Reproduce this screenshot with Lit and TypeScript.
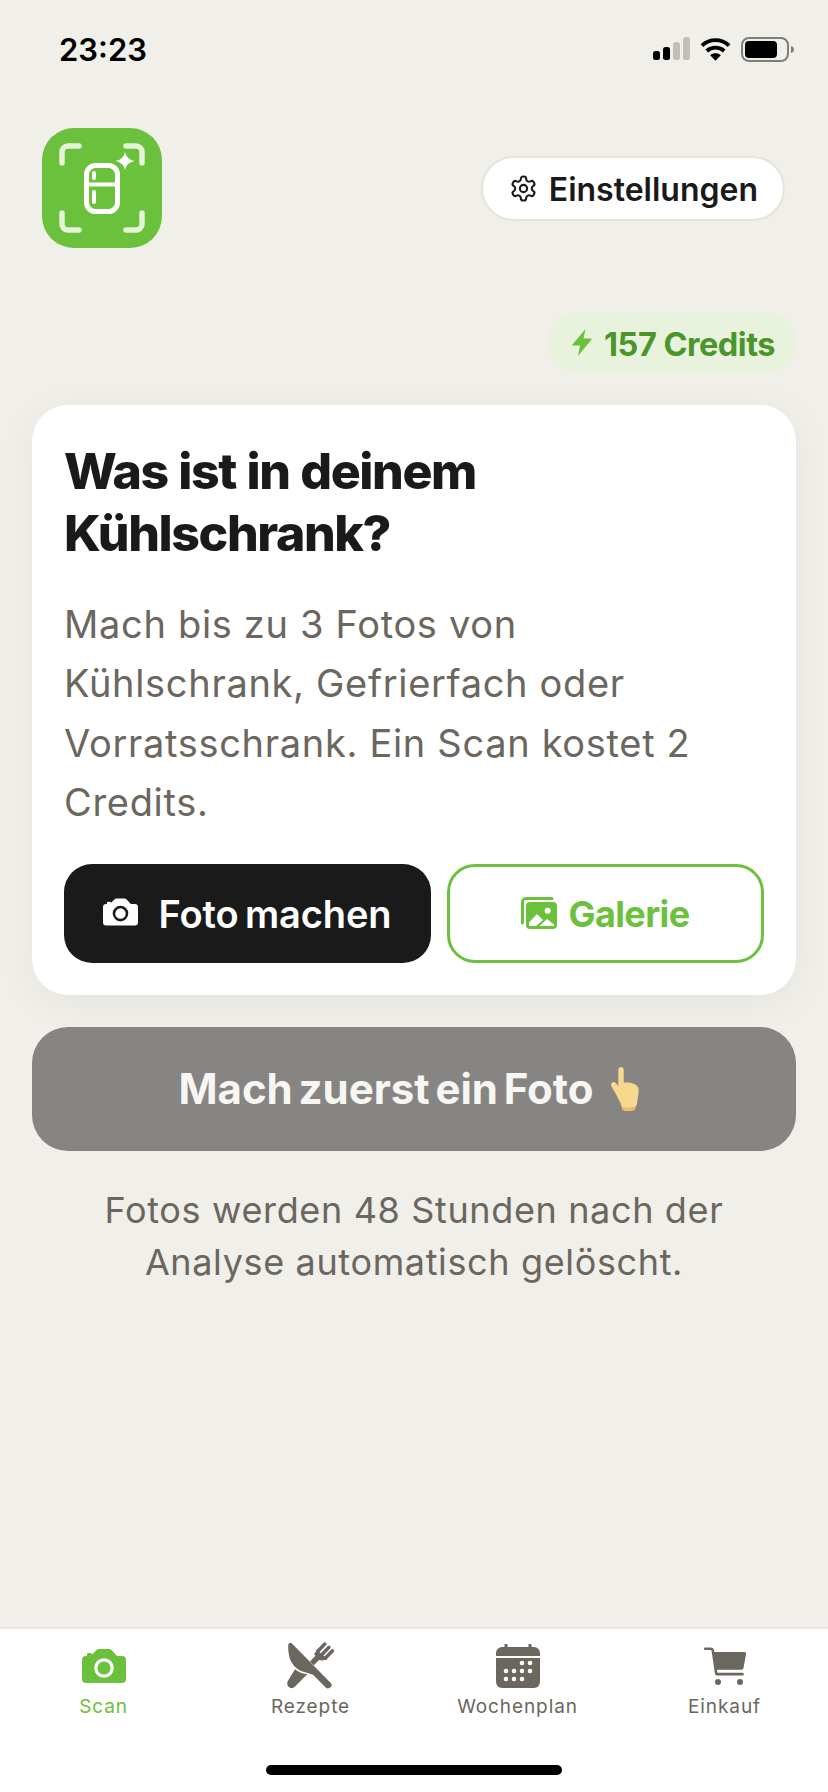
import { LitElement, html, css, svg } from 'lit';
import { customElement } from 'lit/decorators.js';

const cameraIcon = (ring: string) => html`
  <svg viewBox="0 0 44 34" width="100%" height="100%">
    <path fill="currentColor" d="M4 34a4 4 0 0 1-4-4V11a4 4 0 0 1 4-4h1V5.500A1.500 1.500 0 0 1 6.500 4h2A1.500 1.500 0 0 1 10 5.500L14 1.500A4 4 0 0 1 16.500 0h11A4 4 0 0 1 30 1.500L35 7h5a4 4 0 0 1 4 4v19a4 4 0 0 1-4 4z"/>
    <circle cx="22" cy="19" r="8.200" fill="none" stroke=${ring} stroke-width="3.200"/>
  </svg>`;

const tabIcons = {
  camera: cameraIcon('#fff'),
  cutlery: html`
    <svg viewBox="0 0 47 47" width="47" height="47" fill="#6b665e">
      <path d="M1.300 2.300 C2 1 3.700 0.500 4.700 1.300 L44 41.300 C45 42.500 45 44 43.500 45.300 C42 46.500 40.300 46.800 39 45.700 L26.300 33 C23 31.500 20 30.800 16.300 29.700 C9 27.500 5 22 3 17 C1.500 12.500 1 7 1.300 2.300 Z"/>
      <path d="M8 27.300 C11.500 30.500 16 32 20.500 32 L7.500 45 C6 46.500 3.500 46.500 1.800 45 C0 43.200 -0.300 40.500 1 38.700 Z"/>
      <path d="M23 19.500 L28.500 13.800 L27 12.300 L30 8 L40.500 17 C38 18.500 34.500 18.800 32 18 L26.800 23.300 Z"/>
      <g fill="none" stroke="#6b665e" stroke-width="3.400" stroke-linecap="round">
        <path d="M31 9L37.800 2"/>
        <path d="M35 12.500L42 5.200"/>
        <path d="M38.500 16L45.500 8.700"/>
      </g>
    </svg>`,
  calendar: html`
    <svg viewBox="0 0 44 44" width="44" height="44" fill="#6b665e">
      <path d="M8.500 3V1a1.500 1.500 0 0 1 3 0v2h21V1a1.500 1.500 0 0 1 3 0v2H38a6 6 0 0 1 6 6v3H0V9a6 6 0 0 1 6-6z"/>
      <path d="M0 14h44v24a6 6 0 0 1-6 6H6a6 6 0 0 1-6-6z"/>
      <g fill="#fff">
        ${[[26, 19], [34, 19], [10, 27], [18, 27], [26, 27], [34, 27], [10, 35], [18, 35], [26, 35]].map(
          ([x, y]) => svg`<circle cx=${x} cy=${y} r="2.300"/>`
        )}
      </g>
    </svg>`,
  cart: html`
    <svg viewBox="0 0 42 38" width="42" height="38" fill="#6b665e">
      <path d="M1.200 0.500H7a3 3 0 0 1 3 2.500L10.300 5H40a2 2 0 0 1 2 2.300L39.500 21a2 2 0 0 1-2 1.700H13L13.500 25.800H38.500a1.300 1.300 0 0 1 0 2.700H12.800a1.800 1.800 0 0 1-1.800-1.500L7.500 3.500a.6.6 0 0 0-.6-.5H1.200a1.200 1.200 0 0 1 0-2.500z"/>
      <circle cx="14" cy="35" r="3"/>
      <circle cx="36" cy="35" r="3"/>
    </svg>`,
};

const tabs = [
  { label: 'Scan', icon: tabIcons.camera, active: true },
  { label: 'Rezepte', icon: tabIcons.cutlery },
  { label: 'Wochenplan', icon: tabIcons.calendar },
  { label: 'Einkauf', icon: tabIcons.cart },
];

@customElement('app-root')
export class AppRoot extends LitElement {
  static styles = css`
    :host {
      display: block;
      font-family: 'Inter', 'Liberation Sans', sans-serif;
      color: #1a1a1a;
    }

    .page {
      min-height: 1792px;
      display: flex;
      flex-direction: column;
      background: #f0efea;
    }

    .status {
      height: 100px;
      box-sizing: border-box;
      padding: 31px 34px 0 59px;
      display: flex;
      justify-content: space-between;
      align-items: flex-start;
    }

    .time {
      font-size: 31px;
      font-weight: 600;
      line-height: 38px;
      color: #000;
    }

    .status-icons {
      display: flex;
      align-items: flex-start;
      gap: 10px;
      padding-top: 6px;
    }

    .main {
      flex: 1;
      display: flex;
      flex-direction: column;
      padding: 28px 32px 0;
    }

    .top {
      display: flex;
      justify-content: space-between;
      align-items: flex-start;
      padding: 0 11px 0 10px;
    }

    .logo {
      width: 120px;
      height: 120px;
      display: block;
    }

    .settings {
      margin-top: 28px;
      height: 65px;
      box-sizing: border-box;
      display: flex;
      align-items: center;
      gap: 11px;
      padding: 2px 25px 0 26px;
      background: #fff;
      border: 2px solid #e6e3da;
      border-radius: 33px;
      font-size: 32px;
      font-weight: 600;
      white-space: nowrap;
    }

    .settings svg {
      margin-top: -2px;
    }

    .credits {
      align-self: flex-end;
      margin-top: 64px;
      height: 61px;
      box-sizing: border-box;
      display: flex;
      align-items: center;
      gap: 12px;
      padding: 3px 21px 0 24px;
      background: #e8f2dc;
      border-radius: 31px;
      color: #4a962b;
      font-size: 32.500px;
      font-weight: 700;
      letter-spacing: -0.5px;
      white-space: nowrap;
    }

    .credits svg {
      margin-top: -3px;
    }

    .card {
      margin-top: 32px;
      padding: 35px 32px 32px;
      background: #fff;
      border-radius: 36px;
      box-shadow: 0 8px 40px rgba(26, 26, 26, 0.05);
    }

    h1 {
      margin: 0;
      font-size: 50px;
      line-height: 62px;
      font-weight: 800;
      letter-spacing: -1.400px;
      word-spacing: 1px;
    }

    .card p {
      margin: 31px 0 0;
      font-size: 38px;
      line-height: 59.400px;
      letter-spacing: 0.680px;
      color: #6b665e;
    }

    .actions {
      margin-top: 31px;
      display: flex;
      gap: 16px;
    }

    .btn {
      height: 99px;
      box-sizing: border-box;
      padding-top: 2px;
      display: flex;
      align-items: center;
      justify-content: center;
      border-radius: 28px;
      font-weight: 700;
      white-space: nowrap;
    }

    .btn svg {
      margin-top: -2px;
    }

    .btn.dark {
      width: 367px;
      gap: 20px;
      background: #1a1a1a;
      color: #fff;
      font-size: 38px;
      font-weight: 600;
      letter-spacing: -0.100px;
      word-spacing: -3px;
    }

    .btn.dark .cam {
      display: block;
      width: 35px;
      height: 28px;
    }

    .btn.dark .cam svg {
      display: block;
    }

    .btn.outline {
      flex: 1;
      gap: 11px;
      border: 3px solid #6cc13c;
      background: #fff;
      color: #6cc13c;
      font-size: 36px;
      letter-spacing: -0.6px;
    }

    .scan {
      margin-top: 32px;
      height: 124px;
      box-sizing: border-box;
      padding-right: 10px;
      display: flex;
      align-items: center;
      justify-content: center;
      gap: 18px;
      background: #868583;
      color: #f7f6f2;
      border-radius: 36px;
      font-size: 42px;
      font-weight: 700;
      letter-spacing: -0.050px;
      word-spacing: -4px;
    }

    .note {
      margin: 33px 0 0;
      font-size: 36px;
      line-height: 52px;
      letter-spacing: 0.640px;
      text-align: center;
      color: #6b665e;
    }

    .nav {
      height: 165px;
      box-sizing: border-box;
      display: flex;
      flex-direction: column;
      background: #fff;
      border-top: 2px solid #e8e5dd;
    }

    .tabs {
      display: grid;
      grid-template-columns: repeat(4, 1fr);
    }

    .tab {
      display: flex;
      flex-direction: column;
      align-items: center;
      color: #6b665e;
      font-size: 19px;
      font-weight: 400;
      letter-spacing: 0.9px;
    }

    .tab.active {
      color: #6cc13c;
    }

    .tab-icon {
      height: 47px;
      margin-top: 13px;
      display: flex;
      align-items: center;
      justify-content: center;
    }

    .tab.active .tab-icon > svg {
      width: 44px;
      height: 34px;
    }

    .tab span {
      margin-top: 4px;
      line-height: 28px;
    }

    .home {
      width: 296px;
      height: 10px;
      margin: 44px auto 0;
      background: #000;
      border-radius: 5px;
    }
  `;

  render() {
    return html`
      <div class="page">
        <div class="status">
          <div class="time">23:23</div>
          <div class="status-icons">
            <svg width="37" height="24" viewBox="0 0 37 24">
              <rect x="0" y="14" width="7" height="9" rx="2.500" fill="#000"/>
              <rect x="10" y="10" width="7" height="13" rx="2.500" fill="#000"/>
              <rect x="20" y="5" width="7" height="18" rx="2.500" fill="#c0bfba"/>
              <rect x="30" y="0" width="7" height="23" rx="2.500" fill="#c0bfba"/>
            </svg>
            <svg width="31" height="24" viewBox="0 0 32 24" fill="none" stroke="#000" stroke-width="4">
              <path d="M2 8.500 C10 1 22 1 30 8.500"/>
              <path d="M7 14 C12 9.500 20 9.500 25 14"/>
              <path d="M16 24 L10.500 18.500 C13.500 15.800 18.500 15.800 21.500 18.500 Z" fill="#000" stroke="none"/>
            </svg>
            <svg width="53" height="25" viewBox="0 0 53 25">
              <rect x="1" y="1" width="46" height="23" rx="7" fill="none" stroke="#7f7e7b" stroke-width="2"/>
              <rect x="4" y="4" width="32" height="17" rx="4" fill="#000"/>
              <path d="M50 9 C52 9.500 53 11 53 12.500 C53 14 52 15.500 50 16 Z" fill="#7f7e7b"/>
            </svg>
          </div>
        </div>

        <div class="main">
          <div class="top">
            <svg class="logo" viewBox="0 0 120 120">
              <rect width="120" height="120" rx="32" fill="#6cc13c"/>
              <g fill="none" stroke="#e4f3da" stroke-width="5.500" stroke-linecap="round">
                <path d="M20 35V24a6 6 0 0 1 6-6H37"/>
                <path d="M84 18H94a6 6 0 0 1 6 6V35"/>
                <path d="M20 85V96a6 6 0 0 0 6 6H37"/>
                <path d="M84 102H94a6 6 0 0 0 6-6V85"/>
              </g>
              <g fill="none" stroke="#fff" stroke-linecap="round">
                <rect x="44.500" y="37.500" width="31" height="46" rx="9" stroke-width="5"/>
                <path d="M44 56.500H76" stroke-width="4"/>
                <path d="M52 45V50M52 64V74" stroke-width="4"/>
              </g>
              <path fill="#fff" d="M83 24Q84.500 31.500 92.500 33Q84.500 34.500 83 42Q81.500 34.500 73.500 33Q81.500 31.500 83 24Z"/>
            </svg>
            <div class="settings">
              <svg width="29" height="29" viewBox="0 0 24 24" fill="none" stroke="#1a1a1a" stroke-width="1.700" stroke-linejoin="round">
                <path d="M12.220 2h-.44a2 2 0 0 0-2 2v.18a2 2 0 0 1-1 1.730l-.43.250a2 2 0 0 1-2 0l-.15-.08a2 2 0 0 0-2.730.730l-.22.380a2 2 0 0 0 .73 2.730l.15.100a2 2 0 0 1 1 1.720v.510a2 2 0 0 1-1 1.740l-.15.090a2 2 0 0 0-.73 2.730l.22.380a2 2 0 0 0 2.730.730l.15-.08a2 2 0 0 1 2 0l.43.250a2 2 0 0 1 1 1.730V20a2 2 0 0 0 2 2h.44a2 2 0 0 0 2-2v-.18a2 2 0 0 1 1-1.730l.43-.25a2 2 0 0 1 2 0l.15.080a2 2 0 0 0 2.730-.73l.22-.39a2 2 0 0 0-.73-2.730l-.15-.08a2 2 0 0 1-1-1.740v-.5a2 2 0 0 1 1-1.740l.15-.09a2 2 0 0 0 .73-2.730l-.22-.38a2 2 0 0 0-2.730-.73l-.15.08a2 2 0 0 1-2 0l-.43-.25a2 2 0 0 1-1-1.730V4a2 2 0 0 0-2-2z"/>
                <circle cx="12" cy="12" r="3"/>
              </svg>
              Einstellungen
            </div>
          </div>

          <div class="credits">
            <svg width="20" height="27" viewBox="0 0 20 27" fill="#6cc13c">
              <path d="M13.500 0 L0.500 15.500 Q0 16.500 1 16.500 H8 L6 27 L19.500 10.500 Q20 9.500 19 9.500 H11.500 Z"/>
            </svg>
            157 Credits
          </div>

          <div class="card">
            <h1>Was ist in deinem<br />Kühlschrank?</h1>
            <p>Mach bis zu 3 Fotos von<br />Kühlschrank, Gefrierfach oder<br />Vorratsschrank. Ein Scan kostet 2<br />Credits.</p>
            <div class="actions">
              <div class="btn dark"><span class="cam">${cameraIcon('#1a1a1a')}</span>Foto machen</div>
              <div class="btn outline">
                <svg width="36" height="32" viewBox="0 0 36 32">
                  <path d="M1.500 26V5a3.500 3.500 0 0 1 3.500-3.500H31" fill="none" stroke="#6cc13c" stroke-width="3" stroke-linecap="round"/>
                  <rect x="5" y="5" width="31" height="27" rx="4" fill="#6cc13c"/>
                  <circle cx="26.700" cy="13.700" r="3" fill="#fff"/>
                  <path d="M8 29V25.500L16 17L22 23L15 29Z" fill="#fff"/>
                  <path d="M18.500 29L26 22L33 27.500V29Z" fill="#fff"/>
                </svg>
                Galerie
              </div>
            </div>
          </div>

          <div class="scan">
            Mach zuerst ein Foto
            <svg width="28" height="44" viewBox="0 0 28 44">
              <path fill="#f6d98c" d="M7.300 2.700C7.300 -0.900 12.700 -0.900 12.700 2.700V15.600C17 15.400 22 15.800 25 18C27 19.500 27.800 21.500 27.700 24L26 37L23.300 43C20 44.300 15 44.300 11.700 43L9.300 35.600C7.800 33 6.300 30 5 27C3.500 24.500 1 21 0.200 18.500C-0.500 16 2 14 3.800 15.300C5.200 16.300 6.400 17.500 7.300 19Z"/>
              <path fill="#e9bb6a" d="M10.500 39.500C15 41 20 41 24.800 39.500L23.300 43C20 44.300 15 44.300 11.700 43Z"/>
            </svg>
          </div>

          <p class="note">Fotos werden 48 Stunden nach der<br />Analyse automatisch gelöscht.</p>
        </div>

        <nav class="nav">
          <div class="tabs">
            ${tabs.map(
              (t) => html`
                <div class="tab ${t.active ? 'active' : ''}">
                  <div class="tab-icon">${t.icon}</div>
                  <span>${t.label}</span>
                </div>
              `
            )}
          </div>
          <div class="home"></div>
        </nav>
      </div>
    `;
  }
}
